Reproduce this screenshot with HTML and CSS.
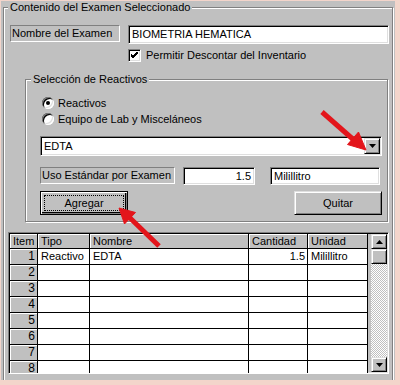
FILE: index.html
```html
<!DOCTYPE html>
<html>
<head>
  <meta charset="UTF-8">
  <link rel="stylesheet" href="styles.css">
</head>
<body>
  <div class="window">
    <fieldset class="group group-main">
      <legend>Contenido del Examen Seleccionado</legend>

      <div class="row">
        <div class="label-box label-name">Nombre del Examen</div>
        <div class="text-box name-box">BIOMETRIA HEMATICA</div>
      </div>

      <div class="row check-row">
        <span class="check">
          <svg width="7" height="7" viewBox="0 0 7 7"><path d="M0 2 L2 4 L7 -1 M0 3 L2 5 L7 0 M0 4 L2 6 L7 1" stroke="#000" stroke-width="1" fill="none"/></svg>
        </span>
        <span>Permitir Descontar del Inventario</span>
      </div>

      <fieldset class="group group-inner">
        <legend>Selección de Reactivos</legend>
        <div class="radio-row"><span class="radio checked"></span>Reactivos</div>
        <div class="radio-row"><span class="radio"></span>Equipo de Lab y Misceláneos</div>

        <div class="combo">
          <span class="combo-text">EDTA</span>
          <span class="raised combo-btn">
            <svg width="7" height="4" viewBox="0 0 7 4"><path d="M0 0 H7 L3.5 4 Z" fill="#000"/></svg>
          </span>
        </div>

        <div class="row uso-row">
          <div class="label-box label-uso">Uso Estándar por Examen</div>
          <div class="text-box qty-box">1.5</div>
          <div class="text-box unit-box">Milillitro</div>
        </div>

        <div class="row btn-row">
          <div class="btn btn-default"><span class="focus">Agregar</span></div>
          <div class="btn raised">Quitar</div>
        </div>
      </fieldset>

      <div class="grid">
        <table class="grid-table">
          <colgroup>
            <col class="c-item"><col class="c-tipo"><col class="c-nombre"><col class="c-cant"><col class="c-unidad">
          </colgroup>
          <thead>
            <tr><th>Item</th><th>Tipo</th><th>Nombre</th><th>Cantidad</th><th>Unidad</th></tr>
          </thead>
          <tbody>
            <tr><td class="num">1</td><td>Reactivo</td><td>EDTA</td><td class="right">1.5</td><td>Milillitro</td></tr>
            <tr><td class="num">2</td><td></td><td></td><td></td><td></td></tr>
            <tr><td class="num">3</td><td></td><td></td><td></td><td></td></tr>
            <tr><td class="num">4</td><td></td><td></td><td></td><td></td></tr>
            <tr><td class="num">5</td><td></td><td></td><td></td><td></td></tr>
            <tr><td class="num">6</td><td></td><td></td><td></td><td></td></tr>
            <tr><td class="num">7</td><td></td><td></td><td></td><td></td></tr>
            <tr><td class="num">8</td><td></td><td></td><td></td><td></td></tr>
          </tbody>
        </table>

        <div class="scrollbar">
          <div class="raised sb-btn">
            <svg width="7" height="4" viewBox="0 0 7 4"><path d="M0 4 H7 L3.5 0 Z" fill="#000"/></svg>
          </div>
          <div class="raised sb-thumb"></div>
          <div class="sb-track"></div>
          <div class="raised sb-btn">
            <svg width="7" height="4" viewBox="0 0 7 4"><path d="M0 0 H7 L3.5 4 Z" fill="#000"/></svg>
          </div>
        </div>
      </div>
    </fieldset>

    <!-- red pointers drawn over the form -->
    <svg class="arrows" width="400" height="385" viewBox="0 0 400 385">
      <g fill="#e3151b" stroke="#e3151b">
        <line x1="322" y1="112" x2="355" y2="141" stroke-width="5"/>
        <polygon points="366,150 347.5,144.5 358.5,132" stroke-width="1"/>
        <line x1="159" y1="246" x2="129" y2="217" stroke-width="5"/>
        <polygon points="119,208 135.5,212.5 124.5,224" stroke-width="1"/>
      </g>
    </svg>
  </div>
</body>
</html>
```

FILE: styles.css
```css
* {
  box-sizing: border-box;
  margin: 0;
  padding: 0;
}

body {
  font-family: "Liberation Sans", Arial, sans-serif;
  font-size: 11px;
  color: #000;
  background: #f3d5cb;
}

.window {
  position: relative;
  width: 400px;
  height: 385px;
  border-style: solid;
  border-color: #f3d5cb;
  border-width: 1px 5px 5px 1px;
  background: #c0c0c0;
  overflow: hidden;
}

/* etched group boxes */
.group {
  border: 1px solid #808080;
  box-shadow: inset 1px 1px #fff, 1px 1px #fff;
}

.group legend {
  background: #c0c0c0;
  padding: 0 2px;
  line-height: 13px;
}

.group-main {
  margin: 0 2px 0 2px;
  padding: 11px 3px 20px 6px;
}

.group-main > legend {
  margin-left: -2px;
}

.group-inner {
  margin: 11px 1px 0 15px;
  padding: 9px 5px 6px 14px;
}

.group-inner > legend {
  margin-left: -9px;
}

.row {
  display: flex;
  align-items: flex-start;
}

/* sunken static label */
.label-box {
  height: 17px;
  line-height: 15px;
  padding-left: 1px;
  border: 1px solid;
  border-color: #808080 #fff #fff #808080;
  white-space: nowrap;
}

.label-name {
  width: 110px;
  margin-right: 8px;
}

.text-box,
.combo {
  height: 19px;
  line-height: 15px;
  background: #fff;
  border: 1px solid;
  border-color: #808080 #fff #fff #808080;
  box-shadow: inset 1px 1px #000, inset -1px -1px #dfdfdf;
  padding: 1px 3px;
  white-space: nowrap;
}

.name-box {
  flex: 1;
}

.check-row {
  margin: 5px 0 0 118px;
  height: 13px;
  line-height: 13px;
  gap: 5px;
}

.check {
  width: 13px;
  height: 13px;
  background: #fff;
  border: 1px solid;
  border-color: #808080 #fff #fff #808080;
  box-shadow: inset 1px 1px #000, inset -1px -1px #dfdfdf;
  display: flex;
  align-items: center;
  justify-content: center;
}

.radio-row {
  display: flex;
  align-items: center;
  height: 16px;
  gap: 4px;
  padding-left: 2px;
}

.radio {
  position: relative;
  width: 12px;
  height: 12px;
  border-radius: 50%;
  background: #fff;
  box-shadow: inset 1px 1px #808080, inset -1px -1px #fff, inset 2px 2px #000, inset -2px -2px #dfdfdf;
}

.radio.checked::after {
  content: "";
  position: absolute;
  left: 4px;
  top: 4px;
  width: 4px;
  height: 4px;
  border-radius: 50%;
  background: #000;
}

.combo {
  display: flex;
  align-items: center;
  justify-content: space-between;
  height: 20px;
  margin-top: 9px;
  padding: 1px 1px 1px 3px;
}

.raised {
  background: #c0c0c0;
  border: 1px solid;
  border-color: #dfdfdf #000 #000 #dfdfdf;
  box-shadow: inset 1px 1px #fff, inset -1px -1px #808080;
}

.combo-btn {
  width: 16px;
  height: 16px;
  display: flex;
  align-items: center;
  justify-content: center;
}

.uso-row {
  margin-top: 11px;
}

.label-uso {
  width: 135px;
  margin-right: 8px;
}

.qty-box {
  width: 72px;
  text-align: right;
  height: 18px;
  margin-right: 15px;
}

.unit-box {
  width: 110px;
  height: 18px;
}

.btn-row {
  margin-top: 6px;
  justify-content: space-between;
}

.btn {
  width: 88px;
  height: 24px;
  display: flex;
  align-items: center;
  justify-content: center;
}

.btn-default {
  border: 1px solid #000;
  background: #c0c0c0;
  box-shadow: inset 1px 1px #fff, inset -1px -1px #808080, inset -2px -2px #000;
  padding: 3px;
}

.btn-default .focus {
  width: 100%;
  height: 100%;
  border: 1px dotted #000;
  display: flex;
  align-items: center;
  justify-content: center;
}

/* data grid */
.grid {
  display: flex;
  margin: 10px 0 0 -2px;
  height: 142px;
  border: 1px solid;
  border-color: #808080 #fff #fff #808080;
  box-shadow: inset 1px 1px #000, inset -1px -1px #dfdfdf;
  padding: 1px;
  overflow: hidden;
}

.grid-table {
  width: 358px;
  table-layout: fixed;
  border-collapse: separate;
  border-spacing: 0;
  background: #fff;
  align-self: flex-start;
}

.c-item { width: 28px; }
.c-tipo { width: 52px; }
.c-nombre { width: 159px; }
.c-cant { width: 59px; }
.c-unidad { width: 60px; }

.grid-table th,
.grid-table td {
  border-right: 1px solid #000;
  border-bottom: 1px solid #000;
  padding: 0 2px 0 3px;
  text-align: left;
  font-weight: normal;
  white-space: nowrap;
  overflow: hidden;
}

.grid-table th {
  height: 15px;
  line-height: 14px;
  background: #c0c0c0;
  box-shadow: inset 1px 1px #fff;
}

.grid-table td {
  height: 16px;
  line-height: 15px;
}

.grid-table td.num {
  background: #c0c0c0;
  box-shadow: inset 1px 1px #fff;
  text-align: right;
  font-size: 12px;
}

.grid-table td.right {
  text-align: right;
}

.scrollbar {
  display: flex;
  flex-direction: column;
  width: 16px;
  margin-left: auto;
}

.sb-btn,
.sb-thumb {
  height: 15px;
  display: flex;
  align-items: center;
  justify-content: center;
}

.sb-track {
  flex: 1;
  background: repeating-conic-gradient(#c0c0c0 0 25%, #fff 0 50%) 0 0 / 2px 2px;
}

.arrows {
  position: absolute;
  left: -1px;
  top: -1px;
  pointer-events: none;
}
```
